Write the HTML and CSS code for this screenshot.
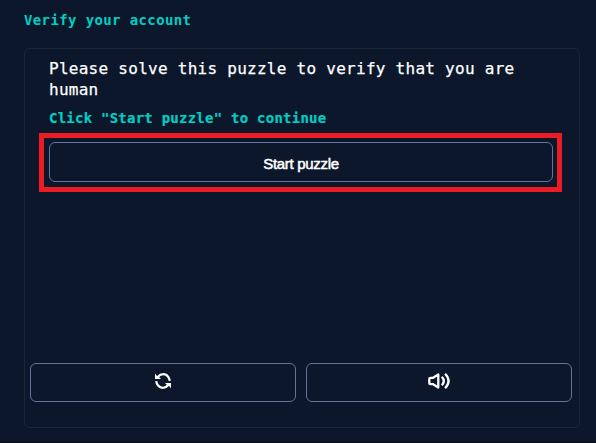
FILE: index.html
```html
<!DOCTYPE html>
<html lang="en">
<head>
<meta charset="utf-8">
<title>Verify your account</title>
<link rel="stylesheet" href="styles.css">
</head>
<body>
<main class="page">
  <h1 class="title">Verify your account</h1>
  <section class="card">
    <div class="intro">
      <p class="message">Please solve this puzzle to verify that you are human</p>
      <p class="hint">Click "Start puzzle" to continue</p>
    </div>
    <div class="highlight">
      <button class="button start">Start puzzle</button>
    </div>
    <div class="controls">
      <button class="button control" aria-label="Restart">
        <svg width="16" height="16" viewBox="0 0 16 16">
          <g fill="none" stroke="#fff" stroke-width="2.2">
            <path d="M2.6 4.6C5 .4 10.6 .1 13.2 3.8Q14.5 5.6 14.8 7.8"/>
            <path d="M13.4 11.4C11 15.6 5.4 15.9 2.8 12.2Q1.5 10.4 1.2 8.2"/>
          </g>
          <path fill="#fff" d="M0 .6 1.3 2.2 6.2 5.9H0ZM16 15.4 14.7 13.8 9.8 10.1H16Z"/>
        </svg>
      </button>
      <button class="button control" aria-label="Audio">
        <svg width="22" height="16" viewBox="0 0 22 16" fill="none" stroke="#fff" stroke-width="2.3" stroke-linejoin="round">
          <path d="M1.3 6Q1.3 4.9 2.4 4.9H4.7L10.3 1.5V14.5L4.7 11.1H2.4Q1.3 11.1 1.3 10Z"/>
          <path d="M13.8 3.7Q17.8 8 13.8 12.3M17.1 .8Q24 8 17.1 15.2"/>
        </svg>
      </button>
    </div>
  </section>
</main>
</body>
</html>
```
FILE: styles.css
```css
* { box-sizing: border-box; }
body {
  margin: 0;
  background: #0c172b;
  color: #fff;
  font-family: "DejaVu Sans Mono", monospace;
}
.page {
  height: 443px;
  padding: 10px 16px 14px 24px;
  border-bottom: 1px solid #050b18;
}
.title {
  height: 38px;
  margin: 0;
  color: #00cec4;
  font-size: 14px;
  letter-spacing: .38px;
  line-height: 20px;
}
.card {
  display: flex;
  flex-direction: column;
  height: 380px;
  padding: 9px 7px 25px 5px;
  border: 1px solid #1d2737;
  border-radius: 6px;
}
.intro { height: 75px; padding-left: 19px; }
.message {
  margin: 0 0 8px;
  font-size: 16px;
  letter-spacing: .27px;
  line-height: 21px;
  -webkit-text-stroke: .25px #fff;
}
.hint {
  margin: 0;
  color: #00cec4;
  font-size: 14px;
  font-weight: bold;
  letter-spacing: .24px;
  line-height: 20px;
  -webkit-text-stroke: .2px #00cec4;
}
.highlight {
  width: 523px;
  height: 59px;
  margin-left: 9px;
  padding: 4px 4px 5px 5px;
  border: 5px solid #ed1c24;
}
.button {
  display: flex;
  align-items: center;
  justify-content: center;
  padding: 0;
  border: 1px solid #627595;
  border-radius: 6px;
  background: transparent;
  color: #fff;
}
.start {
  width: 504px;
  height: 40px;
  padding-top: 2px;
  font: 15px "Liberation Sans", Arial, sans-serif;
  letter-spacing: -.3px;
  -webkit-text-stroke: .5px #fff;
}
.controls {
  display: grid;
  grid-template-columns: 1fr 1fr;
  gap: 10px;
  margin-top: auto;
}
.control { height: 39px; padding-bottom: 3px; }
.control svg { display: block; }
```
